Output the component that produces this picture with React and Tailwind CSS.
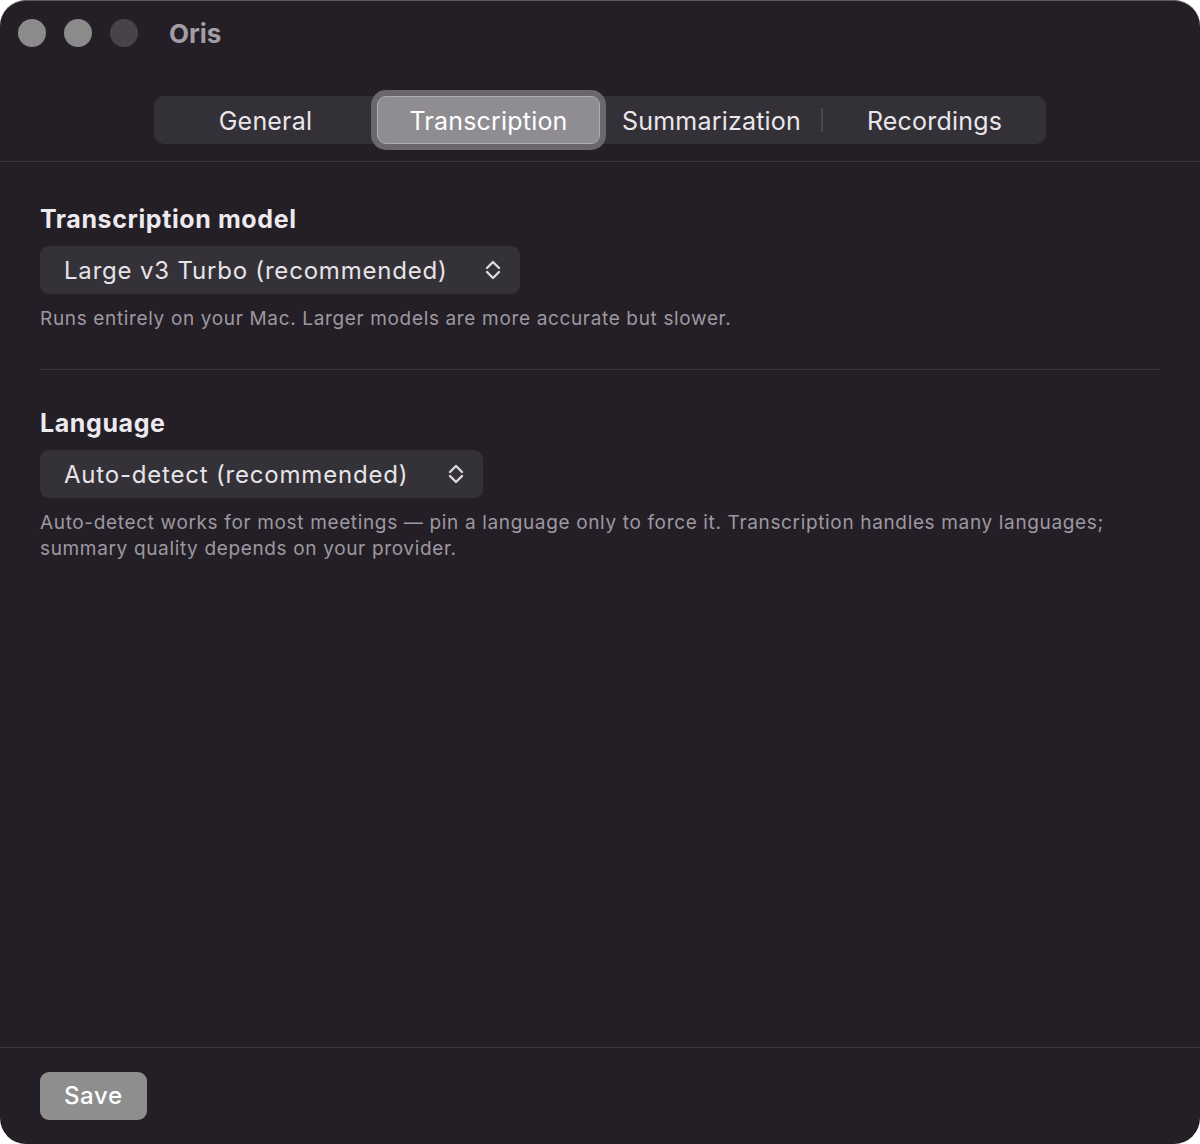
const tabs = ['General', 'Transcription', 'Summarization', 'Recordings'];
const active = 'Transcription';

const UpDown = () => (
  <svg width="16" height="22" viewBox="0 0 16 22" fill="none" stroke="#dcd9de" strokeWidth="2.4" strokeLinecap="round" strokeLinejoin="round">
    <path d="M2 9 L8 3 L14 9" />
    <path d="M2 13 L8 19 L14 13" />
  </svg>
);

const Select = ({ value, width }) => (
  <div className={`mt-[11px] h-12 ${width} flex items-center justify-between pl-6 pr-[19px] rounded-[9px] bg-[#353138]`}>
    <span className="pt-[2px] text-[24px] tracking-[0.8px] text-[#e6e4e8]">{value}</span>
    <UpDown />
  </div>
);

const App = () => {
  return (
    <div className="w-[1200px] h-[1144px] bg-white" style={{ fontFamily: 'Inter, "Open Sans", sans-serif' }}>
      <div className="h-full flex flex-col rounded-[26px] bg-[#241f26] border-t border-[#5c585f] overflow-hidden">
        {/* Title bar */}
        <div className="h-[64px] flex items-center pl-[18px] shrink-0">
          <div className="flex items-center gap-[18px]">
            <span className="w-7 h-7 rounded-full bg-[#8c8b8c]" />
            <span className="w-7 h-7 rounded-full bg-[#8c8b8c]" />
            <span className="w-7 h-7 rounded-full bg-[#48434b]" />
          </div>
          <span className="ml-[31px] text-[26px] font-bold text-[#a39da6]">Oris</span>
        </div>

        {/* Tabs */}
        <div className="flex justify-center pt-[31px] pb-[17px] border-b border-[#3b373e] shrink-0">
          <div className="flex h-12 rounded-[10px] bg-[#343037]">
            {tabs.map((t, i) => (
              <div key={t} className="relative w-[223px] h-full flex items-center justify-center">
                {t === active ? (
                  <div className="w-full h-full flex items-center justify-center rounded-[9px] bg-[#8f8d91] border border-[#aeacb0] shadow-[0_0_0_6px_#6b676e]">
                    <span className="pt-1 text-[25px] tracking-[0.2px] text-white">{t}</span>
                  </div>
                ) : (
                  <span className="pt-1 text-[25px] tracking-[0.2px] text-[#e9e7eb]">{t}</span>
                )}
                {i === 2 && <span className="absolute right-0 top-3 bottom-3 w-[2px] bg-[#4a464d]" />}
              </div>
            ))}
          </div>
        </div>

        {/* Content */}
        <div className="flex-1 px-10 pt-[41px]">
          <h2 className="text-[25px] leading-8 font-bold tracking-[0.6px] text-[#eceaee]">Transcription model</h2>
          <Select value="Large v3 Turbo (recommended)" width="w-[480px]" />
          <p className="mt-3 text-[19px] leading-[26px] tracking-[0.65px] text-[#9d98a0]">
            Runs entirely on your Mac. Larger models are more accurate but slower.
          </p>

          <div className="mt-[37px] h-px bg-[#3b373e]" />

          <h2 className="mt-[37px] text-[25px] leading-8 font-bold tracking-[0.6px] text-[#eceaee]">Language</h2>
          <Select value="Auto-detect (recommended)" width="w-[443px]" />
          <p className="mt-3 text-[19px] leading-[26px] tracking-[0.65px] text-[#9d98a0]">
            Auto-detect works for most meetings — pin a language only to force it. Transcription handles many languages;
            <br />
            summary quality depends on your provider.
          </p>
        </div>

        {/* Footer */}
        <div className="border-t border-[#3b373e] px-10 pt-6 pb-6 shrink-0">
          <button className="h-12 px-6 rounded-[9px] bg-[#8e8e8e] text-[24px] font-medium tracking-[0.6px] text-white">Save</button>
        </div>
      </div>
    </div>
  );
};

export default App;
